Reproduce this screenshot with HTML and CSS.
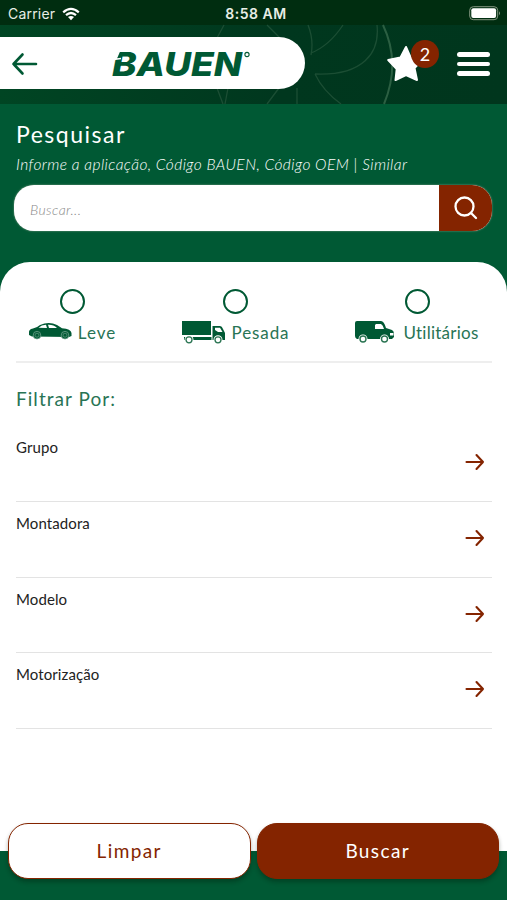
FILE: index.html
```
<!DOCTYPE html>
<html lang="pt-BR">
<head>
<meta charset="utf-8">
<meta name="viewport" content="width=device-width">
<title>Pesquisar</title>
<link rel="stylesheet" href="styles.css">
</head>
<body>
<div class="status">
  <div class="carrier"><span>Carrier</span>
    <svg width="18" height="14" viewBox="0 0 18 14" fill="none" stroke="#fff" stroke-width="2.2"><path d="M1.2 5.4Q9-1.5 16.8 5.4M4 8.2Q9 3.8 14 8.2"/><path d="M6 10.1Q9 7.7 12 10.1L9 13.2Z" fill="#fff" stroke="none"/></svg>
  </div>
  <span class="time">8:58 AM</span>
  <svg class="battery" width="32" height="15" viewBox="0 0 32 15"><rect x=".7" y=".7" width="28" height="13" rx="3.6" fill="none" stroke="#82957f"/><rect x="2.3" y="2.3" width="24.8" height="9.8" rx="2" fill="#fff"/><path d="M30 5.2Q32 7.2 30 9.2Z" fill="#82957f"/></svg>
</div>
<header class="header">
  <svg class="pattern" width="507" height="79" viewBox="0 25 507 79" fill="none" stroke="#1b4e34" stroke-width="1.3"><path d="M383 25Q401 63 384 104" stroke="#2b5f42" stroke-width="2"/><path d="M377 25C380 53 363 76 315 74M343 25Q329 46 311 53M308 25Q314 40 311 55M267 25L280 38M315 74Q323 91 341 104M297 88V104M279 88L267 104M224 25L217 38M217 88L223 104M228 88L225 104"/></svg>
  <div class="brand">
    <svg class="back" width="26" height="24" viewBox="0 0 26 24" fill="none" stroke="#005934" stroke-width="2.6" stroke-linecap="round" stroke-linejoin="round"><path d="M24 12H1.5M10.5 2.5L1.5 12L10.5 21.5"/></svg>
    <svg class="logo" width="142" height="32" viewBox="0 0 142 32"><text class="wordmark" x="1" y="27.5" textLength="130" lengthAdjust="spacingAndGlyphs">BAUEN</text><path d="M3 2H9L5 11H0ZM2.5 11.5L10 10.5" fill="#fff" stroke="#fff" stroke-width="1.4"/><circle cx="136" cy="6.5" r="2.1" fill="none" stroke="#005934" stroke-width="1.1"/></svg>
  </div>
  <div class="favorite">
    <svg width="37" height="37" viewBox="0 0 37 37" fill="#fff" stroke="#fff" stroke-width="2" stroke-linejoin="round"><path d="M19 2L23.7 12.7L35.5 14.5L27.5 23L30 35L19 30L8.5 35L9.7 24L1.2 15L13.5 12.5Z"/></svg>
    <span class="badge">2</span>
  </div>
  <div class="menu"><i></i><i></i><i></i></div>
</header>
<section class="search">
  <h1>Pesquisar</h1>
  <p>Informe a aplicação, Código BAUEN, Código OEM | Similar</p>
  <div class="field"><span class="hint">Buscar...</span>
    <div class="go"><svg width="24" height="24" viewBox="0 0 24 24" fill="none" stroke="#fff" stroke-width="2.3" stroke-linecap="round"><circle cx="10.5" cy="10.5" r="9"/><path d="M17 17L22 22"/></svg></div>
  </div>
</section>
<main class="panel">
  <div class="types">
    <div class="type light"><i class="radio"></i><div class="kind">
      <svg width="44" height="24" viewBox="0 0 44 24"><path d="M1 13Q.5 9 5 8.5Q9 7.7 12 5Q21 .8 29 5L34 8.3Q43 9 43.5 13V16L41 17L4 16.5L1 15Z" fill="#005934"/><path d="M10.5 7.7Q13.5 5 18 4.8L19 8ZM20 4.7Q25.5 4.4 29 8L21 8.1Z" fill="#fff"/><g fill="#005934" stroke="#7fac99" stroke-width=".7"><circle cx="9" cy="15.2" r="3.8"/><circle cx="37" cy="15.2" r="3.8"/></g><g fill="none" stroke="#5c967c" stroke-width=".8"><circle cx="9" cy="15.2" r="2"/><circle cx="37" cy="15.2" r="2"/></g></svg><span>Leve</span></div></div>
    <div class="type heavy"><i class="radio"></i><div class="kind">
      <svg width="44" height="24" viewBox="0 0 44 24"><path d="M0 1H29V15H0ZM2 17H30V20H2ZM30 6H38Q40 6 41 9L43 13V20H30Z" fill="#005934"/><path d="M33 7.7H38L40.5 12H36L33 10Z" fill="#fff"/><path d="M0 16H30M30 6V20" stroke="#fff"/><g fill="#fff" stroke="#fff" stroke-width="3"><circle cx="7" cy="19.8" r="3"/><circle cx="36" cy="19.8" r="3"/></g><g fill="#fff" stroke="#2a7452" stroke-width="1.3"><circle cx="7" cy="19.8" r="3"/><circle cx="36" cy="19.8" r="3"/></g></svg><span>Pesada</span></div></div>
    <div class="type utility"><i class="radio"></i><div class="kind">
      <svg width="40" height="24" viewBox="0 0 40 24"><path d="M2 1H26Q29 1 31 8L37 10Q39 11 39 14V17L37 19H2Q0 18 0 16V3Q0 1 2 1Z" fill="#005934"/><path d="M21 4H26Q28 5 29 9H20V5ZM35 13H38.5V15.5H35Z" fill="#fff"/><g fill="#fff" stroke="#fff" stroke-width="3"><circle cx="8" cy="19" r="3"/><circle cx="29.5" cy="19" r="3"/></g><g fill="#fff" stroke="#2a7452" stroke-width="1.4"><circle cx="8" cy="19" r="3"/><circle cx="29.5" cy="19" r="3"/></g></svg><span>Utilitários</span></div></div>
  </div>
  <h2>Filtrar Por:</h2>
  <div class="filter"><span>Grupo</span><svg viewBox="0 0 20 18"><path d="M1.5 9H18M11.5 2L18 9L11.5 16"/></svg></div>
  <div class="filter"><span>Montadora</span><svg viewBox="0 0 20 18"><path d="M1.5 9H18M11.5 2L18 9L11.5 16"/></svg></div>
  <div class="filter"><span>Modelo</span><svg viewBox="0 0 20 18"><path d="M1.5 9H18M11.5 2L18 9L11.5 16"/></svg></div>
  <div class="filter"><span>Motorização</span><svg viewBox="0 0 20 18"><path d="M1.5 9H18M11.5 2L18 9L11.5 16"/></svg></div>
</main>
<footer class="actions"><button class="clear">Limpar</button><button class="submit">Buscar</button></footer>
</body>
</html>
```
FILE: styles.css
```
* { box-sizing: border-box; }
body { margin: 0; height: 900px; overflow: hidden; display: flex; flex-direction: column; background: #005934; font-family: Lato, sans-serif; color: #222; }
h1, h2, p { margin: 0; font-weight: 400; }
svg { display: block; flex: none; overflow: visible; }
.status { height: 25px; display: grid; grid-template-columns: 1fr auto 1fr; align-items: center; padding: 2px 6px 0 8px; background: #002d10; color: #e8eee6; font: 14px/20px Inter, sans-serif; }
.carrier { display: flex; align-items: center; gap: 7px; letter-spacing: .2px; }
.time { font-weight: 600; letter-spacing: .5px; margin-left: 3px; }
.battery { justify-self: end; }
.header { height: 79px; display: flex; position: relative; align-items: flex-start; background: linear-gradient(90deg, #004523, #00371e 55%, #00361d); padding-top: 12px; }
.pattern { position: absolute; inset: 0; }
.brand { position: relative; width: 305px; height: 52px; border-radius: 0 26px 26px 0; background: #fff; display: flex; align-items: center; padding: 1px 0 0 12px; }
.logo { margin-left: 73px; }
.wordmark { font: italic 800 33px Inter, sans-serif; fill: #005934; }
.favorite { position: relative; margin: 8px 0 0 82px; width: 53px; height: 37px; }
.badge { position: absolute; left: 24px; top: -5px; width: 28px; height: 28px; border-radius: 50%; background: #842400; color: #fff; text-align: center; font: 18px/28px Lato, sans-serif; }
.menu { margin: 15px 0 0 17px; width: 33px; display: grid; gap: 5px; position: relative; }
.menu i { height: 4.5px; border-radius: 3px; background: #fff; }
.search { height: 158px; padding: 16px 15px 0 14px; color: #fff; }
.search h1 { font-size: 23px; line-height: 28px; letter-spacing: 1.5px; padding-left: 2px; }
.search p { font-size: 15.5px; line-height: 20px; font-style: italic; font-weight: 300; letter-spacing: .43px; padding-left: 2px; margin-top: 6px; white-space: nowrap; }
.field { height: 46px; margin-top: 11px; display: flex; border-radius: 20px; overflow: hidden; background: #fff; box-shadow: 0 0 2px #8ba28e; }
.hint { flex: 1; padding: 2px 0 0 16px; font-size: 14px; line-height: 46px; font-style: italic; font-weight: 300; letter-spacing: .4px; color: #888; }
.go { width: 53px; background: #842400; display: flex; align-items: center; justify-content: center; }
.panel { height: 589px; border-radius: 30px 30px 0 0; background: #fff; padding: 0 15px 0 16px; }
.types { height: 101px; border-bottom: 2px solid #eee; display: flex; padding-top: 27px; }
.type { display: flex; flex-direction: column; align-items: center; }
.radio { width: 25px; height: 25px; border: 2.5px solid #005934; border-radius: 50%; }
.kind { display: flex; margin-top: 6px; font-size: 17px; line-height: 25px; color: #287455; }
.light { margin-left: 11px; width: 90px; }
.heavy { margin-left: 63px; width: 111px; }
.utility { margin-left: 64px; width: 124px; }
.kind span { margin-left: 6px; white-space: nowrap; }
.light .kind span { letter-spacing: 1px; }
.heavy .kind span { letter-spacing: .9px; }
.utility .kind span { letter-spacing: .25px; margin-left: 8px; }
.panel h2 { height: 63px; padding-top: 23px; font-size: 19px; line-height: 26px; letter-spacing: 1.05px; color: #287455; }
.filter { height: 75.75px; border-bottom: 1px solid #e3e3e3; padding: 11px 7px 0 0; display: flex; justify-content: space-between; font-size: 15px; line-height: 20px; letter-spacing: .1px; }
.filter svg { width: 20px; height: 18px; margin-top: 16px; fill: none; stroke: #842400; stroke-width: 2.1; stroke-linecap: round; stroke-linejoin: round; }
.actions { height: 49px; display: flex; gap: 6px; padding: 0 8px; }
.actions button { width: 243px; height: 56px; margin-top: -28px; border: 1.5px solid #842400; border-radius: 20px; font: 19px Lato, sans-serif; letter-spacing: 1.4px; box-shadow: 0 3px 4px #00180a55; padding: 0 0 2px; }
.clear { background: #fff; color: #842400; }
.submit { background: #842400; color: #fff; }
```
